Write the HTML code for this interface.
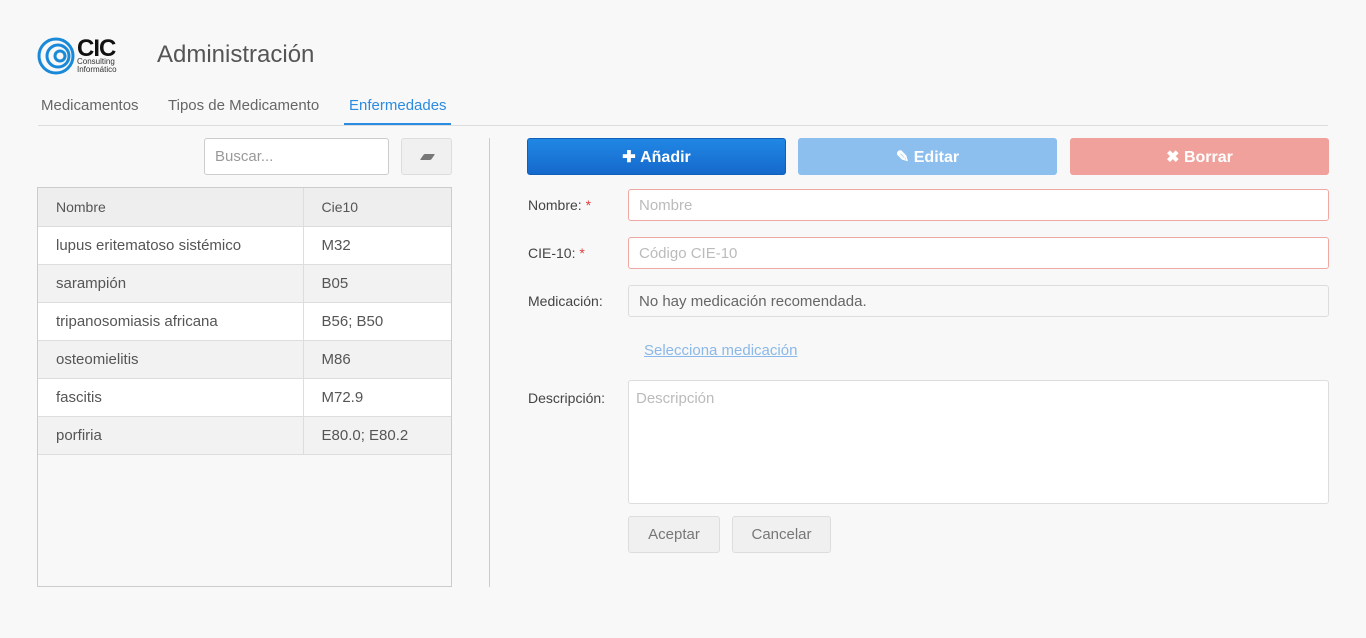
<!DOCTYPE html>
<html><head><meta charset="utf-8"><style>
*{box-sizing:border-box}
body{margin:0;width:1366px;height:638px;background:#f8f8f8;font-family:"Liberation Sans",sans-serif;color:#555;position:relative;overflow:hidden}
.a{position:absolute}
.tab{font-size:15px;top:97px;color:#666}
table{border-collapse:collapse;font-size:15px;color:#555}
td{height:38px;border-bottom:1px solid #ddd;padding:0 18px}
.inp{position:absolute;border:1px solid #ccc;border-radius:3px;background:#fff;font-size:15px;color:#bbb;padding:0 10px;display:flex;align-items:center}
.lbl{position:absolute;left:528px;font-size:14px;color:#444}
.btn{position:absolute;top:138px;height:37px;width:259px;border-radius:3px;color:#fff;font-weight:bold;font-size:16px;display:flex;align-items:center;justify-content:center}
.star{color:#e04040}
</style></head><body>
<svg class="a" style="left:36px;top:36px" width="40" height="40" viewBox="0 0 40 40" fill="none" stroke="#1a8ad8" stroke-width="3"><circle cx="20" cy="20" r="17"/><circle cx="22" cy="20" r="11"/><circle cx="24" cy="20" r="5"/></svg>
<div class="a" style="left:77px;top:35px;font-size:24px;font-weight:bold;color:#111;letter-spacing:-1px">CIC</div>
<div class="a" style="left:77px;top:58px;font-size:8px;line-height:8px;color:#333">Consulting<br>Informático</div>
<div class="a" style="left:157px;top:41px;font-size:24px;color:#555">Administración</div>
<div class="a tab" style="left:41px">Medicamentos</div>
<div class="a tab" style="left:168px">Tipos de Medicamento</div>
<div class="a tab" style="left:349px;color:#2a8be0">Enfermedades</div>
<div class="a" style="left:344px;top:123px;width:107px;height:2px;background:#2a8be0"></div>
<div class="a" style="left:38px;top:125px;width:1290px;height:1px;background:#ddd"></div>
<div class="inp" style="left:204px;top:138px;width:185px;height:37px;color:#999">Buscar...</div>
<div class="a" style="left:401px;top:138px;width:51px;height:37px;border:1px solid #ddd;border-radius:3px;background:#f0f0f0"><div style="position:absolute;left:20px;top:15px;width:11px;height:6px;background:#777;transform:skewX(-35deg);border-radius:1px"></div></div>
<div class="a" style="left:37px;top:187px;width:415px;height:400px;border:1px solid #ccc;background:#f8f8f8">
<table style="width:413px">
<tr style="background:#eee;font-size:14px"><td style="width:265px;border-right:1px solid #ddd">Nombre</td><td>Cie10</td></tr>
<tr style="background:#fff"><td style="border-right:1px solid #ddd">lupus eritematoso sistémico</td><td>M32</td></tr>
<tr style="background:#f2f2f2"><td style="border-right:1px solid #ddd">sarampión</td><td>B05</td></tr>
<tr style="background:#fff"><td style="border-right:1px solid #ddd">tripanosomiasis africana</td><td>B56; B50</td></tr>
<tr style="background:#f2f2f2"><td style="border-right:1px solid #ddd">osteomielitis</td><td>M86</td></tr>
<tr style="background:#fff"><td style="border-right:1px solid #ddd">fascitis</td><td>M72.9</td></tr>
<tr style="background:#f2f2f2"><td style="border-right:1px solid #ddd">porfiria</td><td>E80.0; E80.2</td></tr>
</table></div>
<div class="a" style="left:489px;top:138px;width:1px;height:449px;background:#ccc"></div>
<div class="btn" style="left:527px;background:linear-gradient(#2187e4,#1569cc);border:1px solid #1060b8">✚&nbsp;Añadir</div>
<div class="btn" style="left:798px;background:#8dbfee">✎&nbsp;Editar</div>
<div class="btn" style="left:1070px;background:#f0a19b">✖&nbsp;Borrar</div>
<div class="lbl" style="top:197px">Nombre: <span class="star">*</span></div>
<div class="inp" style="left:628px;top:189px;width:701px;height:32px;border-color:#f0a8a4">Nombre</div>
<div class="lbl" style="top:245px">CIE-10: <span class="star">*</span></div>
<div class="inp" style="left:628px;top:237px;width:701px;height:32px;border-color:#f0a8a4">Código CIE-10</div>
<div class="lbl" style="top:293px">Medicación:</div>
<div class="inp" style="left:628px;top:285px;width:701px;height:32px;border-color:#ddd;background:#f8f8f8;color:#666">No hay medicación recomendada.</div>
<div class="a" style="left:644px;top:342px;font-size:15px;color:#8ab8e8;text-decoration:underline">Selecciona medicación</div>
<div class="lbl" style="top:390px">Descripción:</div>
<div class="inp" style="left:628px;top:380px;width:701px;height:124px;align-items:flex-start;padding-top:9px;padding-left:7px;border-color:#ddd">Descripción</div>
<div class="a" style="left:628px;top:516px;width:92px;height:37px;border:1px solid #ddd;border-radius:3px;background:#f0f0f0;font-size:15px;color:#777;display:flex;align-items:center;justify-content:center">Aceptar</div>
<div class="a" style="left:732px;top:516px;width:99px;height:37px;border:1px solid #ddd;border-radius:3px;background:#f0f0f0;font-size:15px;color:#777;display:flex;align-items:center;justify-content:center">Cancelar</div>
</body></html>
